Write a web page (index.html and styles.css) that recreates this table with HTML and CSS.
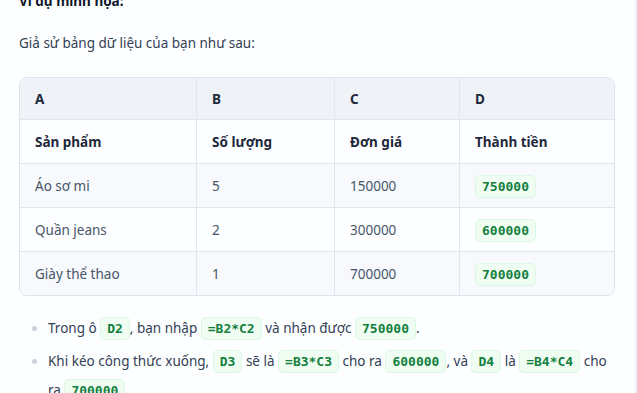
FILE: index.html
```html
<!DOCTYPE html>
<html lang="vi">
<head>
<meta charset="utf-8">
<link rel="stylesheet" href="styles.css">
</head>
<body>
<div class="page">
  <p class="title"><strong>Ví dụ minh họa:</strong></p>
  <p class="intro">Giả sử bảng dữ liệu của bạn như sau:</p>
  <div class="table-wrap">
    <table class="data">
      <thead>
        <tr><th>A</th><th>B</th><th>C</th><th>D</th></tr>
      </thead>
      <tbody>
        <tr class="bold-row"><td>Sản phẩm</td><td>Số lượng</td><td>Đơn giá</td><td>Thành tiền</td></tr>
        <tr class="stripe"><td>Áo sơ mi</td><td>5</td><td>150000</td><td><code>750000</code></td></tr>
        <tr><td>Quần jeans</td><td>2</td><td>300000</td><td><code>600000</code></td></tr>
        <tr class="stripe"><td>Giày thể thao</td><td>1</td><td>700000</td><td><code>700000</code></td></tr>
      </tbody>
    </table>
  </div>
  <ul class="notes">
    <li>Trong ô <code>D2</code>, bạn nhập <code>=B2*C2</code> và nhận được <code>750000</code>.</li>
    <li>Khi kéo công thức xuống, <code>D3</code> sẽ là <code>=B3*C3</code> cho ra <code>600000</code>, và <code>D4</code> là <code>=B4*C4</code> cho ra <code>700000</code>.</li>
  </ul>
</div>
</body>
</html>
```
FILE: styles.css
```css
html, body {
  margin: 0;
  padding: 0;
  background: #fdfeff;
}
body {
  font-family: "Noto Sans", "Open Sans", sans-serif;
  font-size: 13.5px;
  color: #334155;
  overflow: hidden;
  height: 393px;
  border-right: 2px solid #eef1f5;
  box-sizing: border-box;
  width: 637px;
}
.page {
  padding: 0 24px 0 19px;
  margin-top: -11px;
}
.title {
  margin: 0;
  line-height: 24px;
  color: #0f172a;
}
.intro {
  margin: 18px 0 22px;
  line-height: 24px;
}
.table-wrap {
  border: 1px solid #dbe3ee;
  border-radius: 8px;
  overflow: hidden;
  width: 594px;
}
.data {
  width: 100%;
  border-collapse: collapse;
}
.data th, .data td {
  text-align: left;
  padding: 0 15px;
  height: 43px;
  border-right: 1px solid #dfe6ef;
  border-bottom: 1px solid #dfe6ef;
}
.data th { height: 41px; }
.data th:last-child, .data td:last-child { border-right: none; }
.data tbody tr:last-child td { border-bottom: none; }
.data th {
  background: #eff3f7;
  font-weight: 700;
  color: #1e293b;
}
.data th:nth-child(1), .data td:nth-child(1) { width: 146px; }
.data th:nth-child(2), .data td:nth-child(2) { width: 107px; }
.data th:nth-child(3), .data td:nth-child(3) { width: 94px; }
.data td { color: #475569; }
.bold-row td { font-weight: 700; color: #1e293b; }
.stripe td { background: #f7f9fc; }
code {
  font-family: "DejaVu Sans Mono", "Liberation Mono", monospace;
  font-size: 13px;
  font-weight: 700;
  color: #15803d;
  background: #effdf3;
  border: 1px solid #dcf7e4;
  border-radius: 5px;
  padding: 3px 6px;
}
.notes {
  margin: 18px 0 0;
  padding-left: 29px;
}
.notes li {
  line-height: 28px;
  margin-bottom: 4px;
}
.notes li::marker { color: #cbd2dc; }
```
